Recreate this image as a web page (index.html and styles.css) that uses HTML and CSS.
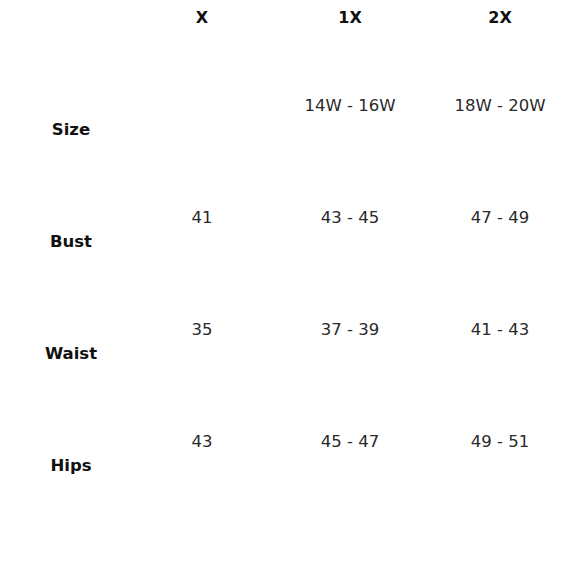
FILE: index.html
```html
<!DOCTYPE html>
<html>
<head>
<meta charset="utf-8">
<link rel="stylesheet" href="styles.css">
</head>
<body>
<div class="chart">
  <div class="row head">
    <div class="cell"></div>
    <div class="cell">X</div>
    <div class="cell">1X</div>
    <div class="cell">2X</div>
  </div>
  <div class="row data">
    <div class="cell label">Size</div>
    <div class="cell"></div>
    <div class="cell">14W - 16W</div>
    <div class="cell">18W - 20W</div>
  </div>
  <div class="row data">
    <div class="cell label">Bust</div>
    <div class="cell">41</div>
    <div class="cell">43 - 45</div>
    <div class="cell">47 - 49</div>
  </div>
  <div class="row data">
    <div class="cell label">Waist</div>
    <div class="cell">35</div>
    <div class="cell">37 - 39</div>
    <div class="cell">41 - 43</div>
  </div>
  <div class="row data">
    <div class="cell label">Hips</div>
    <div class="cell">43</div>
    <div class="cell">45 - 47</div>
    <div class="cell">49 - 51</div>
  </div>
</div>
</body>
</html>
```

FILE: styles.css
```css
html, body {
  margin: 0;
  padding: 0;
  background: #fff;
}
body {
  font-family: "DejaVu Sans", "Open Sans", sans-serif;
  width: 580px;
  height: 580px;
  overflow: hidden;
}
.chart {
  padding-top: 8px;
}
.row {
  display: grid;
  grid-template-columns: 142px 120px 176px 124px;
}
.cell {
  text-align: center;
  line-height: 20px;
  white-space: nowrap;
}
.head {
  height: 20px;
  margin-bottom: 68px;
  font-weight: bold;
  font-size: 16px;
  color: #111;
}
.data {
  height: 112px;
  font-size: 16.5px;
  color: #2a2a2a;
  font-weight: normal;
}
.data .label {
  padding-top: 24px;
  font-weight: bold;
  font-size: 16.5px;
  color: #111;
}
```
